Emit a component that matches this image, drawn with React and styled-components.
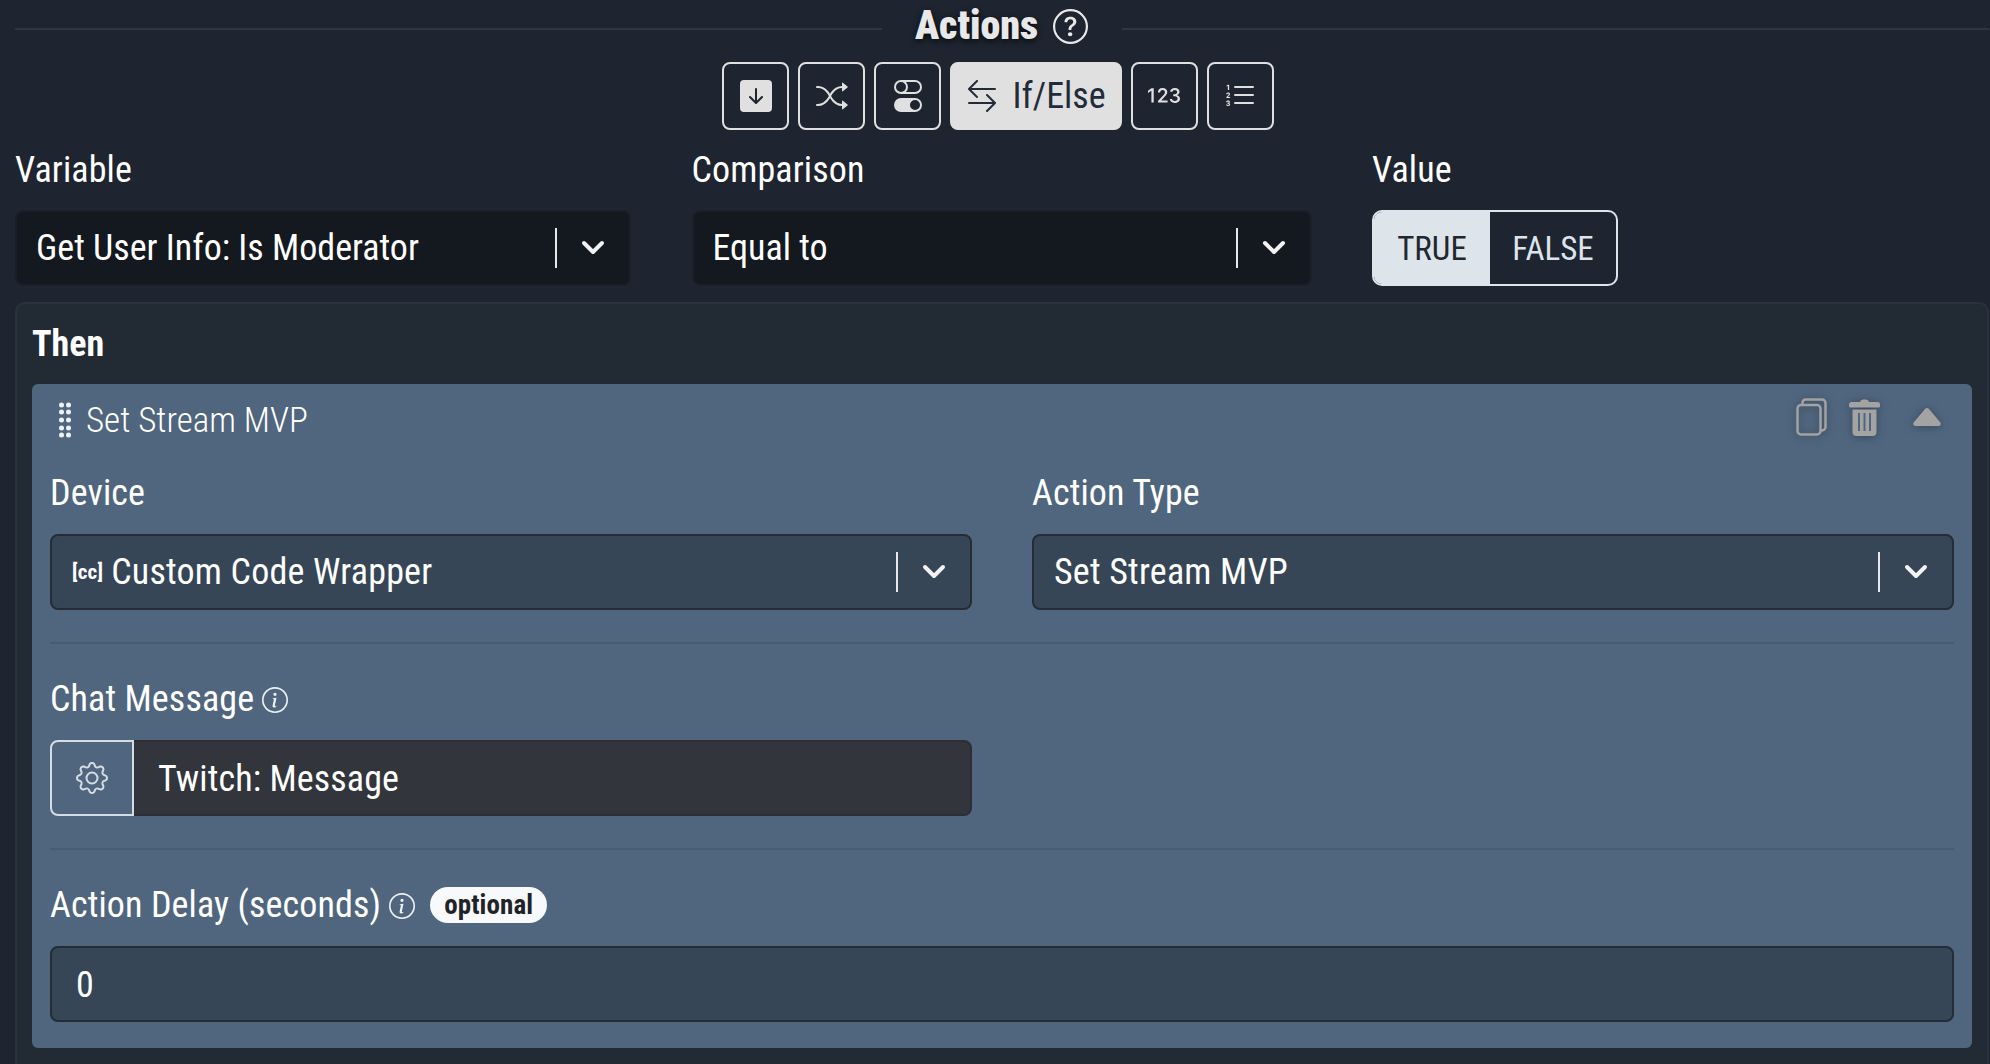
import React from 'react'
import styled, { createGlobalStyle } from 'styled-components'
import {
  BsArrowDownSquareFill,
  BsShuffle,
  BsToggles,
  BsArrowLeftRight,
  Bs123,
  BsListOl,
  BsQuestionCircle,
  BsInfoCircle,
  BsGear,
} from 'react-icons/bs'

const GlobalStyle = createGlobalStyle`
  html, body {
    margin: 0;
    height: 1064px;
    overflow: hidden;
    background: #1e2530;
    font-family: Roboto, "Liberation Sans", sans-serif;
    font-stretch: 85%;
    color: #fff;
  }
  * { box-sizing: border-box; }
`

const Page = styled.div`
  padding: 0 1px 0 15px;
`

const Heading = styled.div`
  height: 52px;
  display: flex;
  align-items: center;
  justify-content: space-between;
`

const HeadingLine = styled.div`
  flex: 1;
  height: 2px;
  margin-top: 6px;
  background: #2d3644;
`

const HeadingBody = styled.div`
  width: 240px;
  display: flex;
  align-items: center;
  justify-content: center;
  gap: 15px;
  padding-right: 1px;
  color: #e8e8e8;
`

const Title = styled.h2`
  margin: 0;
  font-size: 40px;
  line-height: 52px;
  font-weight: 900;
  text-shadow: 0 2px 6px rgba(0, 0, 0, 0.8);
`

const ModeBar = styled.div`
  margin: 10px 8px 0 0;
  display: flex;
  justify-content: center;
  gap: 9px;
`

const ModeButton = styled.button`
  height: 68px;
  min-width: 67px;
  padding: ${(p) => (p.$active ? '0 14px' : '0')};
  display: flex;
  align-items: center;
  justify-content: center;
  gap: 14px;
  border: 2px solid #e0e0e0;
  border-radius: 8px;
  background: ${(p) => (p.$active ? '#e0e0e0' : 'transparent')};
  color: ${(p) => (p.$active ? '#222b38' : '#e0e0e0')};
  font-family: inherit;
  font-stretch: inherit;
  font-size: 36px;
`

const TopRow = styled.div`
  margin-top: 15px;
  display: grid;
  grid-template-columns: 616px 620px 1fr;
  column-gap: 60.5px;
`

const Label = styled.div`
  display: flex;
  align-items: center;
  gap: 8px;
  font-size: 36px;
  line-height: 48px;
  height: 48px;
  padding-top: 2px;
  letter-spacing: 0.12px;
  margin-bottom: ${(p) => p.$gap || '17px'};
`

const Select = styled.div`
  height: 76px;
  display: flex;
  align-items: center;
  padding: ${(p) => (p.$inset ? `2px 24px 0 ${p.$inset}` : `0 24px 0 ${p.$onCard ? '20px' : '19px'}`)};
  border: 2px solid ${(p) => (p.$onCard ? '#262c36' : '#1a2029')};
  border-radius: 8px;
  background: ${(p) => (p.$onCard ? '#364657' : '#14181f')};
  font-size: 36px;
  letter-spacing: ${(p) => (p.$onCard ? '0.2px' : '0')};
`

const SelectText = styled.div`
  flex: 1;
  display: flex;
  align-items: center;
  gap: 8px;
`

const DeviceTag = styled.span`
  font-size: 21px;
  font-weight: 700;
`

const SelectDivider = styled.div`
  width: 2px;
  height: 40px;
  margin-right: 24px;
  background: #e8e8e8;
`

const Toggle = styled.div`
  width: 246px;
  height: 76px;
  display: flex;
  border: 2px solid #dde4ea;
  border-radius: 10px;
  overflow: hidden;
  font-size: 33px;
`

const ToggleSide = styled.div`
  width: ${(p) => (p.$on ? '116px' : '126px')};
  display: flex;
  align-items: center;
  justify-content: center;
  background: ${(p) => (p.$on ? '#dde4ea' : 'transparent')};
  color: ${(p) => (p.$on ? '#1f2731' : '#dde4ea')};
`

const ThenPanel = styled.div`
  margin-top: 16px;
  padding: 14px 15px 30px;
  border: 2px solid #2a323e;
  border-radius: 10px;
  background: #222a34;
`

const ThenTitle = styled.div`
  font-size: 36px;
  line-height: 48px;
  height: 48px;
  padding-top: 2px;
  font-weight: 700;
  margin-bottom: 18px;
`

const Card = styled.div`
  padding: 12px 18px 26px;
  border-radius: 6px;
  background: #50667e;
`

const CardHeader = styled.div`
  display: flex;
  align-items: center;
  height: 48px;
  margin-bottom: 24px;
  padding-left: 9px;
`

const CardTitle = styled.div`
  flex: 1;
  font-size: 35px;
  font-weight: 300;
  margin-left: 15px;
`

const CardActions = styled.div`
  display: flex;
  align-items: center;
  gap: 22px;
  margin: 0 13px 6px 0;
  color: #a3a3a3;

  svg {
    filter: drop-shadow(0 1px 4px rgba(30, 40, 55, 0.5));
  }
`

const Collapse = styled.svg`
  margin-left: 11px;
`

const Columns = styled.div`
  display: grid;
  grid-template-columns: 1fr 1fr;
  column-gap: 60px;
`

const Rule = styled.div`
  height: 2px;
  margin: 32px 0 30px;
  background: #475b72;
`

const InputGroup = styled.div`
  height: 76px;
  display: flex;
`

const GearButton = styled.div`
  width: 84px;
  display: flex;
  align-items: center;
  justify-content: center;
  border: 2px solid #d5dde4;
  border-radius: 8px 0 0 8px;
  color: #d5dde4;
`

const ChatInput = styled.div`
  flex: 1;
  display: flex;
  align-items: center;
  padding: 2px 0 0 24px;
  border: 2px solid #2b2e34;
  border-left: 0;
  border-radius: 0 8px 8px 0;
  background: #32353b;
  font-size: 36px;
  letter-spacing: 0.1px;
`

const InfoIcon = styled(BsInfoCircle)`
  color: #eef1f4;
  margin-top: 2px;
`

const Badge = styled.span`
  margin-left: 7px;
  height: 36px;
  padding: 0 14px;
  display: flex;
  align-items: center;
  border-radius: 18px;
  background: #f8f9fa;
  color: #1f2328;
  font-size: 27px;
  font-weight: 700;
`

const Chevron = () => (
  <svg width="24" height="16" viewBox="0 0 24 16" fill="none" stroke="#f2f2f2" strokeWidth="4" strokeLinecap="round" strokeLinejoin="round">
    <path d="M3 3l9 9 9-9" />
  </svg>
)

const GripIcon = () => (
  <svg width="12" height="36" viewBox="0 0 12 36" fill="#eef1f4">
    {[3, 10, 18, 26, 33].map((y) => (
      <g key={y}>
        <circle cx="2.5" cy={y} r="2.5" />
        <circle cx="9.5" cy={y} r="2.5" />
      </g>
    ))}
  </svg>
)

const CopyIcon = () => (
  <svg width="31" height="38" viewBox="0 0 31 38" fill="none" stroke="currentColor" strokeWidth="2.5">
    <rect x="1.5" y="7" width="23" height="29.5" rx="3.5" />
    <path d="M6.5 6.5V4.5a3 3 0 0 1 3-3h16.5a3.5 3.5 0 0 1 3.5 3.5v24a3.5 3.5 0 0 1-3.5 3.5H25" />
  </svg>
)

const TrashIcon = () => (
  <svg width="31" height="37" viewBox="0 0 31 37">
    <path fill="currentColor" d="M11 3a3 3 0 0 1 3-2.5h3A3 3 0 0 1 20 3h8.5a2.5 2.5 0 0 1 2.5 2.5V7a1.5 1.5 0 0 1-1.5 1.5h-28A1.5 1.5 0 0 1 0 7V5.500A2.500 2.500 0 0 1 2.500 3zM3.500 10.500h24V33a4 4 0 0 1-4 4h-16a4 4 0 0 1-4-4z" />
    <path stroke="#50667e" strokeWidth="2" d="M10 14v18M15.500 14v18M21 14v18" />
  </svg>
)

const CollapseIcon = () => (
  <Collapse width="28" height="18" viewBox="0 0 28 18" fill="currentColor">
    <path d="M11.800 1.200a3 3 0 0 1 4.400 0l11 13A2.300 2.300 0 0 1 25.500 18h-23A2.300 2.300 0 0 1 .8 14.200z" />
  </Collapse>
)

const DropdownField = ({ onCard, tag, children }) => (
  <Select $onCard={onCard}>
    <SelectText>
      {tag && <DeviceTag>{tag}</DeviceTag>}
      {children}
    </SelectText>
    <SelectDivider />
    <Chevron />
  </Select>
)

export default function App() {
  return (
    <Page>
      <GlobalStyle />
      <Heading>
        <HeadingLine />
        <HeadingBody>
          <Title>Actions</Title>
          <BsQuestionCircle size={35} />
        </HeadingBody>
        <HeadingLine />
      </Heading>

      <ModeBar>
        <ModeButton><BsArrowDownSquareFill size={32} /></ModeButton>
        <ModeButton><BsShuffle size={32} /></ModeButton>
        <ModeButton><BsToggles size={32} /></ModeButton>
        <ModeButton $active><BsArrowLeftRight size={32} />If/Else</ModeButton>
        <ModeButton><Bs123 size={32} /></ModeButton>
        <ModeButton><BsListOl size={32} /></ModeButton>
      </ModeBar>

      <TopRow>
        <div>
          <Label>Variable</Label>
          <DropdownField>Get User Info: Is Moderator</DropdownField>
        </div>
        <div>
          <Label>Comparison</Label>
          <DropdownField>Equal to</DropdownField>
        </div>
        <div>
          <Label>Value</Label>
          <Toggle>
            <ToggleSide $on>TRUE</ToggleSide>
            <ToggleSide>FALSE</ToggleSide>
          </Toggle>
        </div>
      </TopRow>

      <ThenPanel>
        <ThenTitle>Then</ThenTitle>
        <Card>
          <CardHeader>
            <GripIcon />
            <CardTitle>Set Stream MVP</CardTitle>
            <CardActions>
              <CopyIcon />
              <TrashIcon />
              <CollapseIcon />
            </CardActions>
          </CardHeader>

          <Columns>
            <div>
              <Label $gap="18px">Device</Label>
              <DropdownField onCard tag="[cc]">Custom Code Wrapper</DropdownField>
            </div>
            <div>
              <Label $gap="18px">Action Type</Label>
              <DropdownField onCard>Set Stream MVP</DropdownField>
            </div>
          </Columns>

          <Rule />

          <Label $gap="18px">Chat Message <InfoIcon size={26} /></Label>
          <Columns>
            <InputGroup>
              <GearButton><BsGear size={32} /></GearButton>
              <ChatInput>Twitch: Message</ChatInput>
            </InputGroup>
          </Columns>

          <Rule />

          <Label $gap="18px">
            Action Delay (seconds) <InfoIcon size={26} />
            <Badge>optional</Badge>
          </Label>
          <Select $onCard $inset="24px">0</Select>
        </Card>
      </ThenPanel>
    </Page>
  )
}
